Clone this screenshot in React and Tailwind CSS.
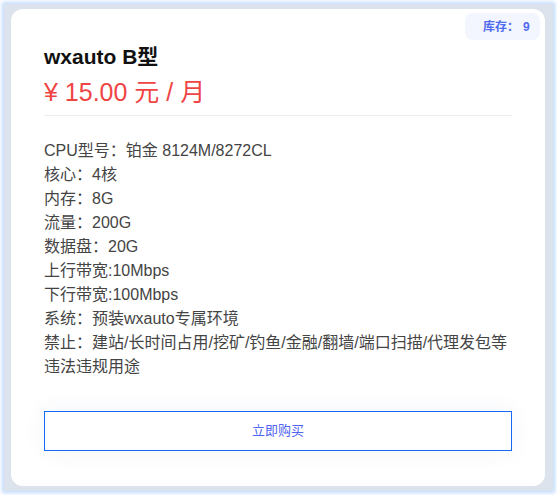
const SPECS = [
  'CPU型号：铂金 8124M/8272CL',
  '核心：4核',
  '内存：8G',
  '流量：200G',
  '数据盘：20G',
  '上行带宽:10Mbps',
  '下行带宽:100Mbps',
  '系统：预装wxauto专属环境',
  '禁止：建站/长时间占用/挖矿/钓鱼/金融/翻墙/端口扫描/代理发包等违法违规用途'
]

const FONT = '[font-family:"Liberation_Sans","Noto_Sans_CJK_SC",sans-serif]'

export default function App() {
  return (
    <div className={`h-screen w-full bg-white p-[4px] ${FONT}`}>
      <div className="h-full bg-[#dde3ec] shadow-[0_0_4px_2px_#bfdbfe] pl-[7px] pt-[5px] pr-[8px] pb-[5px]">
        <div className="relative h-full rounded-[12px] bg-white px-[33px] pt-[34px]">
          {/* Stock badge */}
          <div className="absolute right-[5px] top-[4px] flex h-[27px] w-[75px] items-center gap-[4px] rounded-[8px] bg-[#f3f6fe] pl-[18px] text-[12px] font-bold text-[#4f6cf0]">
            <span>库存：</span>
            <span>9</span>
          </div>

          <h1 className="text-[21px] font-bold leading-[28px] text-[#111]">wxauto B型</h1>
          <div className="mt-[4px] text-[25px] leading-[34px] text-[#ef4444]">¥ 15.00 元 / 月</div>
          <div className="mt-[6px] h-px bg-[#ececec]" />

          <ul className="mt-[23px] text-[16px] leading-[24px] text-[#444]">
            {SPECS.map((s) => (
              <li key={s}>{s}</li>
            ))}
          </ul>

          <button className="mt-[32px] flex h-[40px] w-full items-center justify-center border border-[#1668f5] bg-white text-[13px] text-[#5165f2] shadow-[0_0_24px_rgba(30,60,140,0.06)]">
            立即购买
          </button>
        </div>
      </div>
    </div>
  )
}
